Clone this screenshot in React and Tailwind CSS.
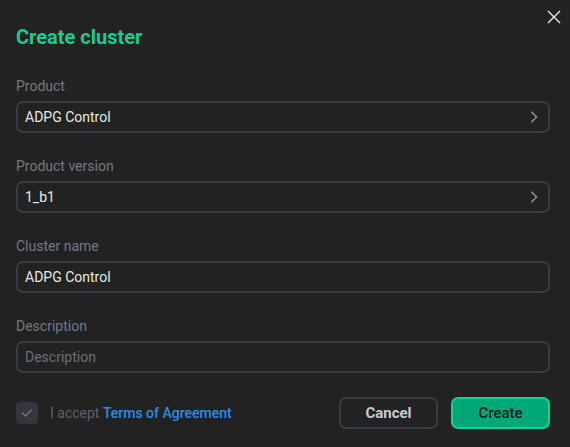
import { useState } from 'react';

function Chevron() {
  return (
    <svg width="8" height="12" viewBox="0 0 8 12" fill="none" className="shrink-0">
      <path d="M1.8 1.2L6.6 6L1.8 10.8" stroke="#8c929a" strokeWidth="1.6" strokeLinecap="round" strokeLinejoin="round" />
    </svg>
  );
}

function Field({ label, value, placeholder, select }) {
  return (
    <div className="flex flex-col">
      <label className="text-sm leading-5 text-[#737981]">{label}</label>
      <div className="mt-[5px] h-8 border-2 border-[#363c44] rounded-[7px] pl-[7px] pr-[10px] flex items-center justify-between">
        {value ? (
          <span className="text-sm leading-5 text-[#e6e8ea]">{value}</span>
        ) : (
          <span className="text-sm leading-5 text-[#6b7078]">{placeholder}</span>
        )}
        {select && <Chevron />}
      </div>
    </div>
  );
}

export default function App() {
  const [accepted] = useState(true);

  return (
    <div
      className="relative w-[570px] h-[447px] bg-[#222222] pl-4 pr-5 pt-[23px]"
      style={{ fontFamily: 'Roboto, "Noto Sans", sans-serif' }}
    >
      <button className="absolute top-[10px] right-[9px] w-[14px] h-[14px]">
        <svg width="14" height="14" viewBox="0 0 14 14" fill="none">
          <path d="M1 1L13 13M13 1L1 13" stroke="#ececec" strokeWidth="1.4" />
        </svg>
      </button>

      <h1 className="text-xl leading-7 font-bold text-[#1ec98f]">Create cluster</h1>

      <div className="mt-[25px] flex flex-col gap-[23px]">
        <Field label="Product" value="ADPG Control" select />
        <Field label="Product version" value="1_b1" select />
        <Field label="Cluster name" value="ADPG Control" />
        <Field label="Description" placeholder="Description" />
      </div>

      <div className="mt-6 h-8 flex items-center">
        <div className="w-[22px] h-[22px] rounded-[4px] bg-[#33363d] flex items-center justify-center">
          {accepted && (
            <svg width="12" height="10" viewBox="0 0 12 10" fill="none">
              <path d="M1.5 5L4.5 8L10.5 2" stroke="#6e737b" strokeWidth="1.6" strokeLinecap="round" strokeLinejoin="round" />
            </svg>
          )}
        </div>
        <span className="ml-3 text-sm leading-5 text-[#5d626a]">
          I accept <a className="font-medium text-[#2d8ce6]">Terms of Agreement</a>
        </span>

        <div className="ml-auto flex gap-[13px]">
          <button className="w-[99px] h-8 border-2 border-[#363c44] rounded-[7px] text-[15px] font-bold text-[#c8ccd1]">
            Cancel
          </button>
          <button className="w-[99px] h-8 border-2 border-[#17d095] bg-[#00a877] rounded-[7px] text-[15px] font-medium text-[#151a18]">
            Create
          </button>
        </div>
      </div>
    </div>
  );
}
